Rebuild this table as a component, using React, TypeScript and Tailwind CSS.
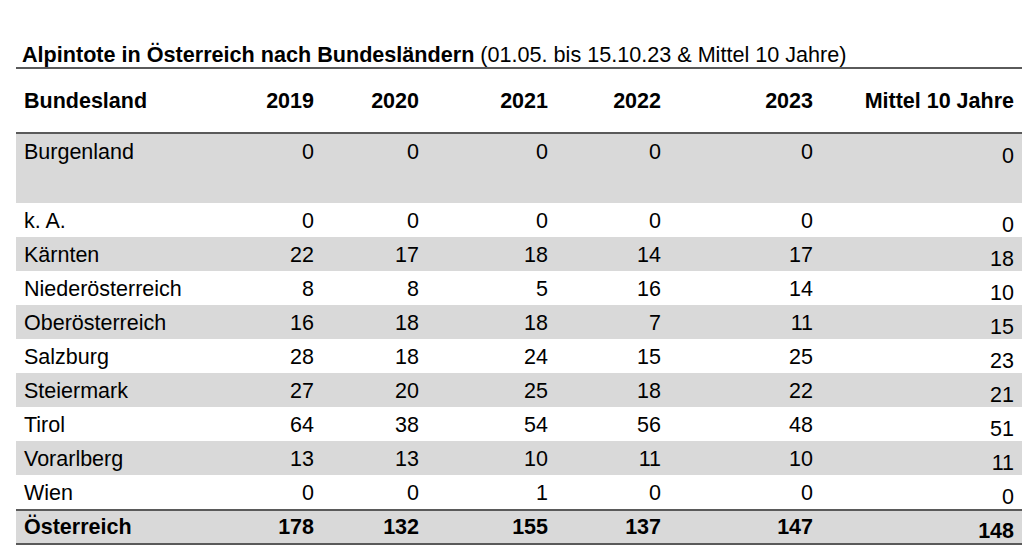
import React from 'react';

type Row = { name: string; values: number[]; mittel: number; shaded: boolean; tall?: boolean };

const rows: Row[] = [
  { name: 'Burgenland', values: [0, 0, 0, 0, 0], mittel: 0, shaded: true, tall: true },
  { name: 'k. A.', values: [0, 0, 0, 0, 0], mittel: 0, shaded: false },
  { name: 'Kärnten', values: [22, 17, 18, 14, 17], mittel: 18, shaded: true },
  { name: 'Niederösterreich', values: [8, 8, 5, 16, 14], mittel: 10, shaded: false },
  { name: 'Oberösterreich', values: [16, 18, 18, 7, 11], mittel: 15, shaded: true },
  { name: 'Salzburg', values: [28, 18, 24, 15, 25], mittel: 23, shaded: false },
  { name: 'Steiermark', values: [27, 20, 25, 18, 22], mittel: 21, shaded: true },
  { name: 'Tirol', values: [64, 38, 54, 56, 48], mittel: 51, shaded: false },
  { name: 'Vorarlberg', values: [13, 13, 10, 11, 10], mittel: 11, shaded: true },
  { name: 'Wien', values: [0, 0, 1, 0, 0], mittel: 0, shaded: false },
];

const years = ['2019', '2020', '2021', '2022', '2023'];
const cols = 'grid grid-cols-[206px_100px_105px_129px_113px_152px_201px]';

export default function App() {
  return (
    <div className="w-[1024px] h-[547px] bg-white text-black font-['Liberation_Sans',Arial,sans-serif] text-[21.5px] leading-[24px] overflow-hidden">
      <div className="ml-4 mr-[2px] pt-[43px]">
        <div className="border-b-2 border-[#5a5a5a] pl-[6px] h-[26px] whitespace-nowrap text-[21.6px]">
          <span className="font-bold">Alpintote in Österreich nach Bundesländern</span> (01.05. bis 15.10.23 &amp; Mittel 10 Jahre)
        </div>

        <div className={`${cols} h-[65px] items-center font-bold border-b-2 border-[#5a5a5a]`}>
          <div className="pl-2">Bundesland</div>
          {years.map((y) => (
            <div key={y} className="text-right pr-2">{y}</div>
          ))}
          <div className="text-right pr-2">Mittel 10 Jahre</div>
        </div>

        {rows.map((r) => (
          <div
            key={r.name}
            className={`${cols} ${r.tall ? 'h-[69px]' : 'h-[34px]'} ${r.shaded ? 'bg-[#d9d9d9]' : 'bg-white'}`}
          >
            <div className="pl-2 pt-[6px]">{r.name}</div>
            {r.values.map((v, i) => (
              <div key={i} className="text-right pr-2 pt-[6px]">{v}</div>
            ))}
            <div className="text-right pr-2 pt-[10px]">{r.mittel}</div>
          </div>
        ))}

        <div className={`${cols} h-[36px] bg-[#d9d9d9] font-bold border-y-2 border-[#5a5a5a]`}>
          <div className="pl-2 pt-[4px]">Österreich</div>
          {[178, 132, 155, 137, 147].map((v, i) => (
            <div key={i} className="text-right pr-2 pt-[4px]">{v}</div>
          ))}
          <div className="text-right pr-2 pt-[8px]">148</div>
        </div>
      </div>
    </div>
  );
}
